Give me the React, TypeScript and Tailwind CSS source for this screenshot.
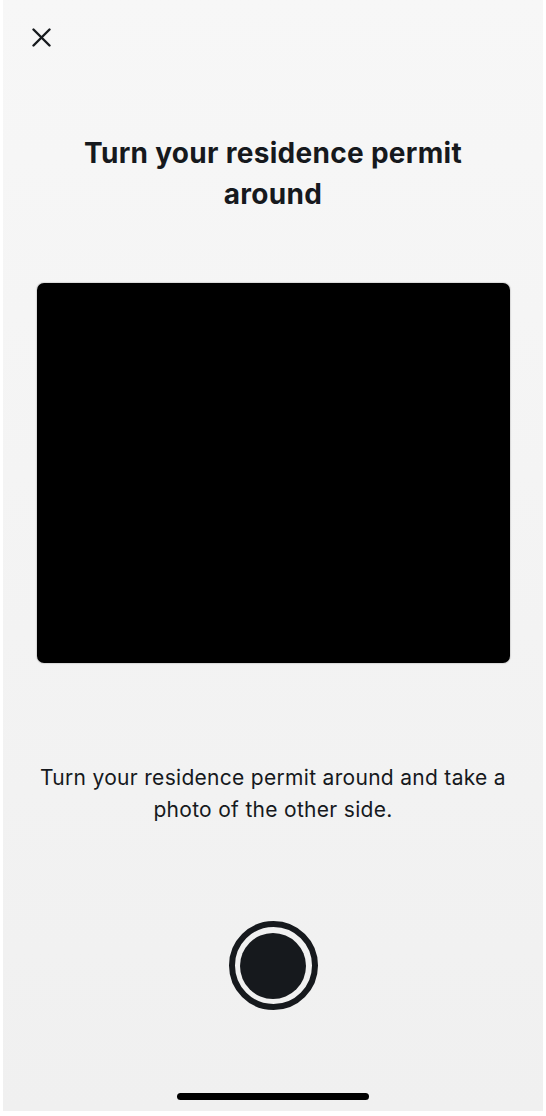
import React from "react";

export default function App() {
  return (
    <div className="w-[546px] h-[1116px] bg-white pl-[3px] pr-[3px] pb-[5px]" style={{ fontFamily: "Inter, 'Noto Sans', sans-serif" }}>
      <div className="relative h-full w-full flex flex-col items-center bg-gradient-to-b from-[#f7f7f7] to-[#f0f0f0]">
        <div className="w-full h-[75px] flex items-start">
          <svg className="ml-[29px] mt-[28px]" width="19" height="19" viewBox="0 0 19 19" fill="none">
            <path d="M1.5 1.5L17.5 17.5M17.5 1.5L1.5 17.5" stroke="#16191d" strokeWidth="2.4" strokeLinecap="round" />
          </svg>
        </div>
        <h1 className="mt-[58px] w-[460px] text-center text-[28px] leading-[41px] font-bold text-[#16191d] tracking-[0.3px]">
          Turn your residence permit around
        </h1>
        <div className="mt-[68px] w-[473px] h-[380px] bg-black rounded-[7px] shadow-[0_0_1px_1px_rgba(0,0,0,0.12)]" />
        <p className="mt-[99px] w-[500px] text-center text-[21px] leading-[32px] text-[#16191d] tracking-[0.3px]">
          Turn your residence permit around and take a photo of the other side.
        </p>
        <div className="mt-[95px] w-[89px] h-[89px] rounded-full border-[6px] border-[#16191d] flex items-center justify-center">
          <div className="w-[66px] h-[66px] rounded-full bg-[#16191d]" />
        </div>
        <div className="mt-[83px] w-[192px] h-[7px] rounded-full bg-black" />
      </div>
    </div>
  );
}
